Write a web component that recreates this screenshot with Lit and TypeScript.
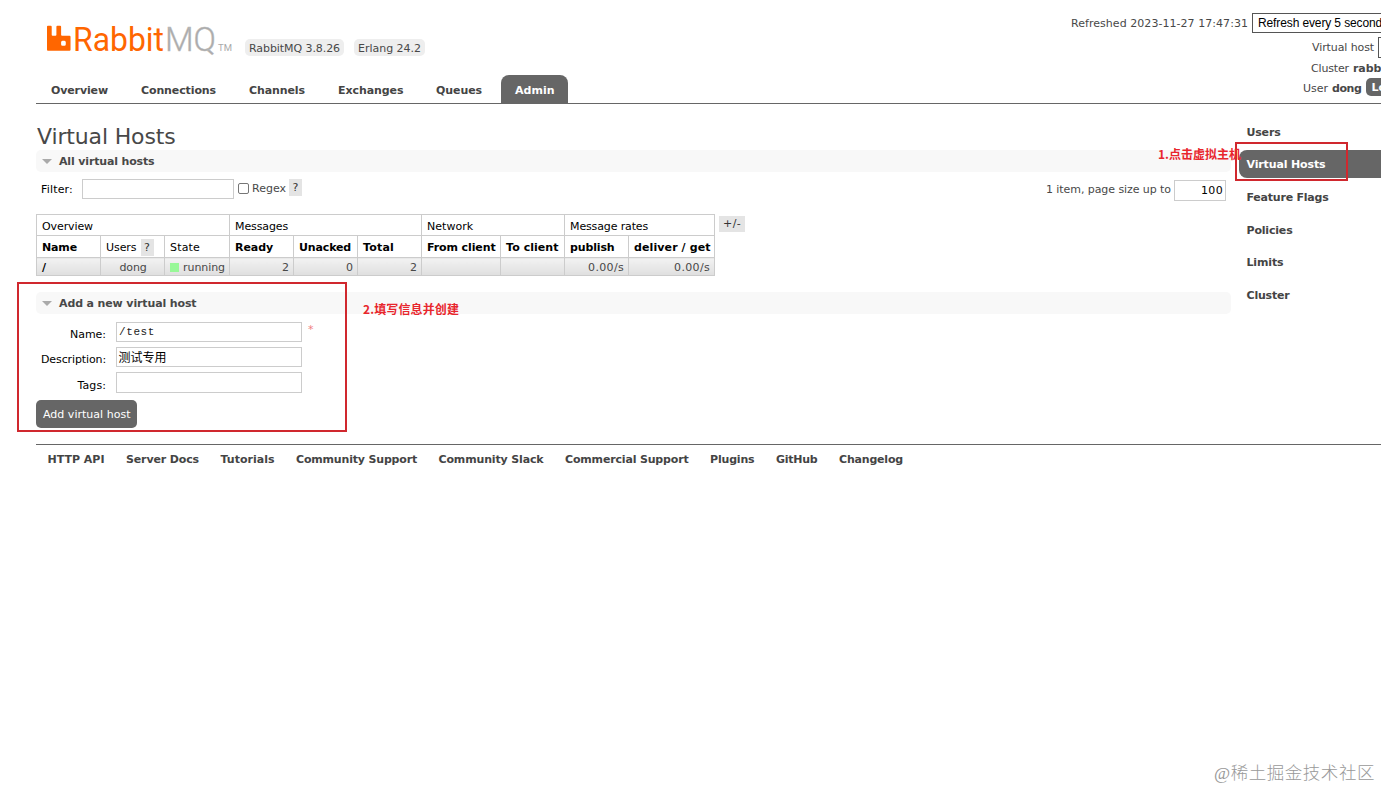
import { LitElement, html, css } from "lit";
import { customElement, property } from "lit/decorators.js";

/** Text run tracked so that it spans exactly `w` pixels. */
@customElement("tracked-text")
class TrackedText extends LitElement {
  @property({ type: Number }) w = 0;
  @property() text = "";
  static styles = css`
    :host { display: inline-block; white-space: pre; flex: none; }
    .run { display: inline-block; }
  `;
  updated() {
    const run = this.renderRoot.querySelector(".run") as HTMLElement;
    run.style.letterSpacing = "0px";
    const natural = run.getBoundingClientRect().width;
    const n = [...this.text].length;
    run.style.letterSpacing = `${(this.w - natural) / n}px`;
  }
  render() {
    return html`<span class="run">${this.text}</span>`;
  }
}

const t = (text: string, w: number) => html`<tracked-text .text=${text} .w=${w}></tracked-text>`;

const TABS: [string, number][] = [
  ["Overview", 57], ["Connections", 75], ["Channels", 56], ["Exchanges", 65.5], ["Queues", 46], ["Admin", 39.5],
];
const SIDE: [string, number][] = [
  ["Users", 34], ["Virtual Hosts", 79], ["Feature Flags", 82], ["Policies", 46], ["Limits", 37], ["Cluster", 43],
];
const LINKS: [string, number][] = [
  ["HTTP API", 57], ["Server Docs", 73], ["Tutorials", 54], ["Community Support", 121], ["Community Slack", 105],
  ["Commercial Support", 123.5], ["Plugins", 44.5], ["GitHub", 41.5], ["Changelog", 64],
];

@customElement("app-root")
class AppRoot extends LitElement {
  static styles = css`
    :host {
      display: block; position: relative; width: 1381px; height: 789px; overflow: hidden; background: #fff;
      font: 11px/16px "DejaVu Sans", "Noto Sans CJK SC", sans-serif; color: #484848;
    }
    * { box-sizing: border-box; }
    b, .b { font-weight: bold; }
    .header { display: flex; justify-content: space-between; height: 104px; margin-left: 36px; border-bottom: 1px solid #666; }
    .left { display: flex; flex-direction: column; justify-content: space-between; }
    .brand { display: flex; padding: 12px 0 0 9px; }
    .logo { display: block; width: 190px; height: 54px; margin-right: 10px; }
    .tags { display: flex; gap: 10px; padding-top: 27px; }
    .tag { height: 17px; padding: 1.5px 4px 0; background: #eee; border-radius: 5px; }
    .tabs { display: grid; grid-template-columns: 90px 108px 89px 98px 79px 67px; padding-left: 1px; }
    .tab { height: 28px; padding: 8px 0 0 14px; font-weight: bold; border-radius: 8px 8px 0 0; color: #444; }
    .tab.on, .item.on { background: #666; color: #fff; }
    .status { width: 311px; padding-top: 13px; flex: none; }
    .line { display: flex; white-space: nowrap; }
    .l1 { height: 20px; padding-left: 1px; gap: 4px; }
    .l1 tracked-text { padding-top: 3px; }
    .select { width: 160px; height: 20px; flex: none; border: 1px solid #555; color: #000; padding-left: 5px; font: 12px/18px "Liberation Sans", sans-serif; }
    .l1 .select tracked-text { padding: 0; }
    .l2 { height: 25px; padding: 4px 0 0 242px; gap: 4px; align-items: center; }
    .vh { width: 60px; height: 21px; flex: none; border: 1px solid #555; }
    .l3 { height: 20px; padding: 3px 0 0 241px; gap: 4px; }
    .l4 { height: 20px; padding-left: 233px; gap: 4px; }
    .l4 tracked-text { padding-top: 3px; }
    .logout { width: 60px; height: 18px; flex: none; background: #666; border-radius: 5px; color: #fff; padding: 0 0 0 6px; font-weight: bold; }
    .l4 .logout tracked-text { padding-top: 2px; }
    .body { display: grid; grid-template-columns: 1195px 1fr; column-gap: 8px; margin-left: 36px; height: 340px; }
    h1 { margin: 0; height: 46px; padding: 20px 0 0 1px; font-weight: normal; font-size: 22px; line-height: 26px; }
    h2 { margin: 0; height: 22px; padding: 4px 0 0 6px; background: #f8f8f8; border-radius: 5px; font-size: 11px; line-height: 16px; display: flex; gap: 7px; }
    .tri { width: 10px; height: 5px; margin-top: 5px; background: #aaa; clip-path: polygon(0 0, 100% 0, 50% 100%); }
    .filter { display: flex; height: 42px; padding: 7px 5px 0; align-items: flex-start; }
    .filter > tracked-text { padding-top: 3px; }
    .filter > .first { padding-top: 3px; color: #000; }
    .box { border: 1px solid #ccc; background: #fff; height: 20px; color: #000; }
    .search { width: 152px; margin: 0 4px 0 9px; }
    .check { width: 11px; height: 11px; margin: 4px 3px 0 0; border: 1px solid #767676; border-radius: 2px; }
    .help { background: #e4e4e4; text-align: center; color: #333; }
    .filter .help { width: 13px; height: 17px; margin-left: 3px; padding-top: 1px; }
    .rest { flex: 1; }
    .size { width: 52px; height: 21px; margin: 1px 0 0 3px; display: flex; justify-content: flex-end; padding: 2px 2px 0 0; }
    .filter .reg { padding-top: 2px; }
    .lists { display: flex; gap: 4px; height: 78px; align-items: flex-start; }
    table { border-collapse: collapse; table-layout: fixed; width: 678px; color: #000; }
    td { border: 1px solid #ccc; padding: 2px 5px 0; white-space: nowrap; vertical-align: middle; line-height: 15px; }
    td > * { vertical-align: top; }
    .r1 { height: 21px; } .r2 { height: 22px; } .r3 { height: 18px; }
    .r3 td { background: linear-gradient(#f2f2f2, #dfdfdf); color: #484848; text-align: right; padding: 2px 4px 0 5px; }
    .r3 td.c { text-align: center; } .r3 td.k { text-align: left; color: #000; font-weight: bold; }
    .r2 .help { display: inline-block; width: 13px; height: 17px; margin: -1px 0 -2px 4px; padding-top: 1px; }
    .green { display: inline-block; width: 9px; height: 9px; margin: 3px 4px 0 0; background: #98f898; }
    .pm { width: 26px; height: 16px; margin-top: 2px; }
    .form { display: grid; grid-template-columns: 70px 186px auto; grid-auto-rows: 20px; row-gap: 5px; column-gap: 10px; padding-top: 8px; justify-content: start; color: #000; }
    .form .lab { text-align: right; padding-top: 5px; }
    .form .low { padding-top: 6px; }
    .field { padding: 1px 2px; line-height: 16px; }
    .tags-field { height: 21px; }
    .mono { font-family: "Liberation Mono", monospace; color: #222; }
    .field.cjk { font: 12px/18px "Noto Sans CJK SC", sans-serif; padding: 0 1.5px; }
    .star { color: #f08080; margin-left: -4px; }
    .btn { width: 101px; height: 28px; margin-top: 8px; background: #666; color: #fff; border-radius: 5px; padding: 6.5px 0 0 7px; }
    .side { padding-top: 14px; font-weight: bold; color: #444; display: flex; flex-direction: column; gap: 4.6px; }
    .item { height: 28px; flex: none; padding: 7px 0 0 7.5px; border-radius: 8px 0 0 8px; }
    .item.on { margin-top: -.6px; margin-bottom: .6px; }
    .footer { display: flex; gap: 21.5px; margin-left: 36px; border-top: 1px solid #666; padding: 7px 0 0 11.5px; font-weight: bold; color: #444; }
    .mark { position: absolute; border: 2px solid #d0282e; }
    .m1 { left: 1235px; top: 142px; width: 113px; height: 39px; }
    .m2 { left: 17px; top: 282px; width: 330px; height: 150px; }
    .note { position: absolute; color: #e8262d; font: bold 12px/16px "Noto Sans CJK SC", sans-serif; }
    .n1 { left: 1158px; top: 146px; } .n2 { left: 363px; top: 301px; }
    .water { position: absolute; left: 1214px; top: 761px; color: #999; font: 300 17.5px/24px "Liberation Serif", "Noto Sans CJK SC", serif; }
  `;

  render() {
    return html`
      <div class="header">
        <div class="left">
          <div class="brand">
            <svg class="logo" viewBox="45 12 190 54">
              <g transform="translate(47 25.8) scale(.98 1.04)">
                <path fill="#f60" d="M23.035 9.601h-7.677a.956.956 0 01-.962-.962V.962a.956.956 0 00-.962-.956H10.56a.956.956 0 00-.962.956V8.64a.956.956 0 01-.962.962H5.762a.956.956 0 01-.961-.962V.962A.956.956 0 003.839 0H.959a.956.956 0 00-.956.962v22.076A.956.956 0 00.965 24h22.07a.956.956 0 00.962-.962V10.58a.956.956 0 00-.962-.98zm-3.86 8.152a1.437 1.437 0 01-1.437 1.443h-1.924a1.437 1.437 0 01-1.436-1.443v-1.917a1.437 1.437 0 011.436-1.443h1.924a1.437 1.437 0 011.437 1.443z"/>
              </g>
              <text x="73" y="51" font-family="Roboto" font-size="34" fill="#f60" textLength="91" lengthAdjust="spacingAndGlyphs">Rabbit</text>
              <text x="165" y="51" font-family="Roboto" font-weight="300" font-size="34" fill="#aaa" stroke="#bbb" stroke-width=".5" textLength="51" lengthAdjust="spacingAndGlyphs">MQ</text>
              <text x="218" y="51" font-family="Roboto" font-size="8.5" fill="#aaa" textLength="14" lengthAdjust="spacingAndGlyphs">TM</text>
            </svg>
            <div class="tags">
              <div class="tag">${t("RabbitMQ 3.8.26", 91)}</div>
              <div class="tag">${t("Erlang 24.2", 63)}</div>
            </div>
          </div>
          <div class="tabs">
            ${TABS.map(([s, w]) => html`<div class="tab ${s === "Admin" ? "on" : ""}">${t(s, w)}</div>`)}
          </div>
        </div>
        <div class="status">
          <div class="line l1">${t("Refreshed 2023-11-27 17:47:31", 177)}<div class="select">${t("Refresh every 5 seconds", 130)}</div></div>
          <div class="line l2">${t("Virtual host", 62)}<div class="vh"></div></div>
          <div class="line l3">${t("Cluster", 38)}<b>${t("rabbit@", 48)}</b></div>
          <div class="line l4">${t("User", 25)}<b>${t("dong", 29.5)}</b><div class="logout">${t("Log out", 46)}</div></div>
        </div>
      </div>
      <div class="body">
        <div class="main">
          <h1>${t("Virtual Hosts", 138.5)}</h1>
          <h2><span class="tri"></span>${t("All virtual hosts", 95.5)}</h2>
          <div class="filter">
            <span class="first">${t("Filter:", 32)}</span><div class="box search"></div><span class="check"></span>
            <span class="reg">${t("Regex", 34)}</span><div class="help">?</div>
            <span class="rest"></span>${t("1 item, page size up to", 125)}<div class="box size">${t("100", 22)}</div>
          </div>
          <div class="lists">
            <table>
              <colgroup>${[64, 64, 65, 64, 64, 64, 79, 64, 64, 86].map((w) => html`<col width=${w}>`)}</colgroup>
              <tr class="r1"><td colspan="3">${t("Overview", 51)}</td><td colspan="3">${t("Messages", 53)}</td><td colspan="2">${t("Network", 46)}</td><td colspan="2">${t("Message rates", 78)}</td></tr>
              <tr class="r2">
                <td class="b">${t("Name", 35)}</td><td>${t("Users", 30.5)}<span class="help">?</span></td><td>${t("State", 30)}</td>
                <td class="b">${t("Ready", 38)}</td><td class="b">${t("Unacked", 52)}</td><td class="b">${t("Total", 31)}</td>
                <td class="b">${t("From client", 68.5)}</td><td class="b">${t("To client", 52.5)}</td><td class="b">${t("publish", 44.5)}</td><td class="b">${t("deliver / get", 76.5)}</td>
              </tr>
              <tr class="r3">
                <td class="k">/</td><td class="c">${t("dong", 27)}</td><td><span class="green"></span>${t("running", 42)}</td>
                <td>2</td><td>0</td><td>2</td><td></td><td></td><td>${t("0.00/s", 36)}</td><td>${t("0.00/s", 36)}</td>
              </tr>
            </table>
            <div class="help pm">${t("+/-", 18)}</div>
          </div>
          <h2><span class="tri"></span>${t("Add a new virtual host", 137.5)}</h2>
          <div class="form">
            <div class="lab">${t("Name:", 36)}</div><div class="box field mono">${t("/test", 36)}</div><div class="star">*</div>
            <div class="lab">${t("Description:", 65)}</div><div class="box field cjk">测试专用</div><div></div>
            <div class="lab low">${t("Tags:", 28.5)}</div><div class="box tags-field"></div><div></div>
          </div>
          <div class="btn">${t("Add virtual host", 87.5)}</div>
        </div>
        <div class="side">
          ${SIDE.map(([s, w]) => html`<div class="item ${s === "Virtual Hosts" ? "on" : ""}">${t(s, w)}</div>`)}
        </div>
      </div>
      <div class="footer">${LINKS.map(([s, w]) => t(s, w))}</div>
      <div class="mark m1"></div>
      <div class="mark m2"></div>
      <div class="note n1">${t("1.点击虚拟主机", 83)}</div>
      <div class="note n2">${t("2.填写信息并创建", 96)}</div>
      <div class="water">${t("@稀土掘金技术社区", 161)}</div>
    `;
  }
}
